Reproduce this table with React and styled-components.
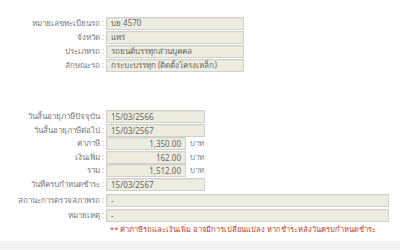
import styled, { createGlobalStyle } from "styled-components";

const Global = createGlobalStyle`
  html, body {
    margin: 0;
    padding: 0;
    background: #ffffff;
  }
  body {
    font-family: Tahoma, "Noto Sans", "DejaVu Sans", sans-serif;
  }
`;

const Page = styled.div`
  width: 400px;
  height: 250px;
  display: flex;
  flex-direction: column;
  overflow: hidden;
`;

const Content = styled.div`
  flex: 1;
  display: flex;
  flex-direction: column;
  padding-top: 17px;
`;

const Block = styled.div`
  display: flex;
  flex-direction: column;
  gap: ${(p) => p.$gap || 1}px;
  margin-bottom: ${(p) => p.$after || 0}px;
`;

const Row = styled.div`
  display: flex;
  align-items: center;
  height: ${(p) => p.$h || 13}px;
  margin-top: ${(p) => p.$top || 0}px;
`;

const Label = styled.div`
  width: 106px;
  text-align: right;
  font-size: 8px;
  color: #7a7a7a;
  white-space: nowrap;
  padding-right: 2px;
  box-sizing: border-box;
  &::after {
    content: " :";
    color: #aaa;
  }
`;

const Field = styled.div`
  width: ${(p) => p.$w}px;
  height: 100%;
  box-sizing: border-box;
  background: #ededdf;
  border: 1px solid #d0d0d0;
  box-shadow: inset 1px 1px 0 #e2e2d8;
  font-size: 8px;
  color: #666;
  padding: 0 4px;
  display: flex;
  align-items: center;
  justify-content: ${(p) => (p.$right ? "flex-end" : "flex-start")};
  white-space: nowrap;
  overflow: hidden;
`;

const Unit = styled.span`
  font-size: 8px;
  color: #888;
  margin-left: 4px;
`;

const Note = styled.div`
  margin: 2px 0 0 110px;
  font-size: 7.5px;
  line-height: 10px;
  color: #c0392b;
  white-space: nowrap;
`;

const Footer = styled.div`
  height: 9px;
  background: #f4f4f4;
`;

const carInfo = [
  ["หมายเลขทะเบียนรถ", "บย 4570"],
  ["จังหวัด", "แพร่"],
  ["ประเภทรถ", "รถยนต์บรรทุกส่วนบุคคล"],
  ["ลักษณะรถ", "กระบะบรรทุก (ติดตั้งโครงเหล็ก)"],
];

const money = [
  ["ค่าภาษี", "1,350.00"],
  ["เงินเพิ่ม", "162.00"],
  ["รวม", "1,512.00"],
];

export default function App() {
  return (
    <Page>
      <Global />
      <Content>
        <Block $after={38}>
          {carInfo.map(([label, value]) => (
            <Row key={label}>
              <Label>{label}</Label>
              <Field $w={138}>{value}</Field>
            </Row>
          ))}
        </Block>

        <Block $gap={0.5}>
          <Row>
            <Label>วันสิ้นอายุภาษีปัจจุบัน</Label>
            <Field $w={99}>15/03/2566</Field>
          </Row>
          <Row>
            <Label>วันสิ้นอายุภาษีต่อไป</Label>
            <Field $w={99}>15/03/2567</Field>
          </Row>
          {money.map(([label, value]) => (
            <Row key={label}>
              <Label>{label}</Label>
              <Field $w={80} $right>
                {value}
              </Field>
              <Unit>บาท</Unit>
            </Row>
          ))}
          <Row>
            <Label>วันที่ครบกำหนดชำระ</Label>
            <Field $w={99}>15/03/2567</Field>
          </Row>
          <Row $top={3}>
            <Label>สถานะการตรวจสภาพรถ</Label>
            <Field $w={283}>-</Field>
          </Row>
          <Row $top={1}>
            <Label>หมายเหตุ</Label>
            <Field $w={283}>-</Field>
          </Row>
        </Block>

        <Note>
          ** ค่าภาษีรถและเงินเพิ่ม อาจมีการเปลี่ยนแปลง หากชำระหลังวันครบกำหนดชำระ
        </Note>
      </Content>
      <Footer />
    </Page>
  );
}
